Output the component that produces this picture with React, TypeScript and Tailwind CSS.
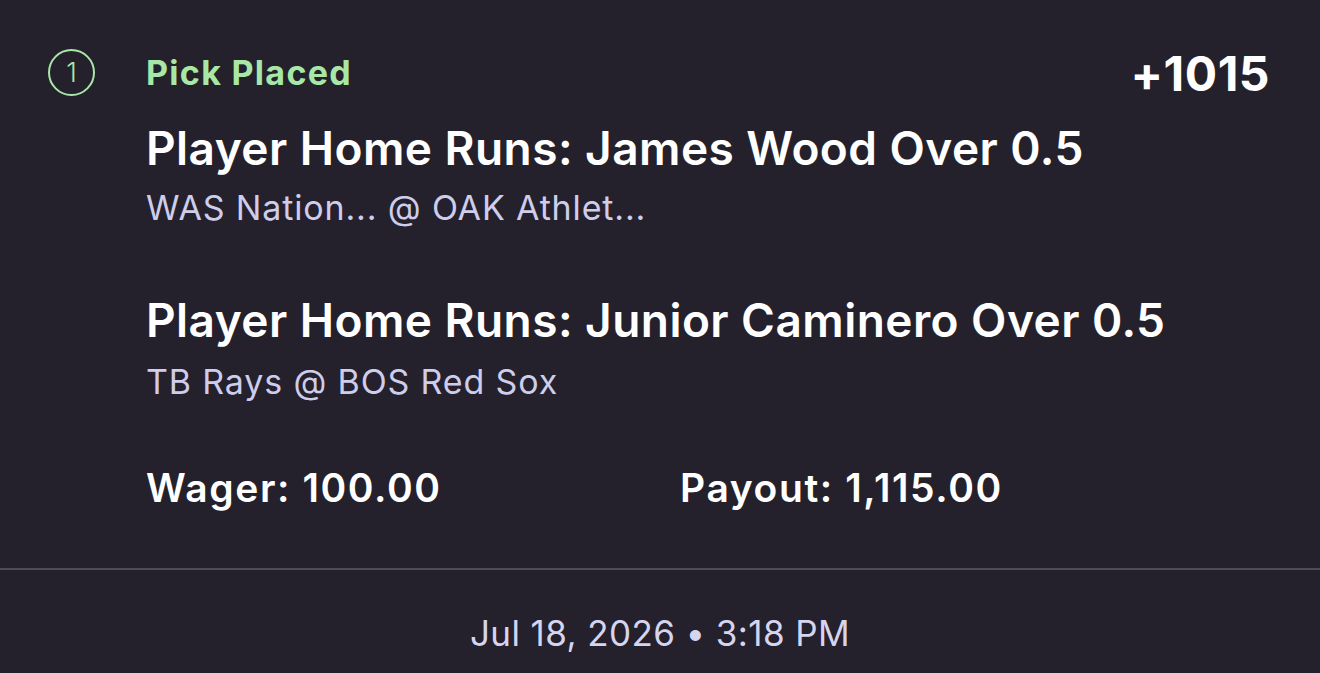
import React from 'react';

const legs = [
  { title: 'Player Home Runs: James Wood Over 0.5', matchup: 'WAS Nation... @ OAK Athlet...' },
  { title: 'Player Home Runs: Junior Caminero Over 0.5', matchup: 'TB Rays @ BOS Red Sox' },
];

const StepBadge = ({ n }: { n: number }) => (
  <div className="flex h-[47px] w-[47px] items-center justify-center rounded-full border-2 border-[#a8e8a6] text-[27px] font-light leading-none text-[#a8e8a6]">
    {n}
  </div>
);

export default function App() {
  return (
    <div className="min-h-[673px] w-full bg-[#24212c] font-['Inter','Noto_Sans',sans-serif] text-white">
      <div className="flex pt-[47px] pl-[48px] pr-[50px]">
        <div className="w-[98px] shrink-0">
          <div className="flex h-[50px] items-center">
            <StepBadge n={1} />
          </div>
        </div>
        <div className="flex-1">
          <div className="flex h-[50px] items-center justify-between">
            <span className="text-[34px] font-bold tracking-[1.3px] text-[#a8e8a6]">Pick Placed</span>
            <span className="mt-[4px] text-[48px] font-bold tracking-[0.5px]">+1015</span>
          </div>

          {legs.map((leg, i) => (
            <div key={leg.title} className={i === 0 ? 'mt-[25px]' : 'mt-[66px]'}>
              <div className="text-[46px] font-semibold leading-[52px] tracking-[0.45px]">{leg.title}</div>
              <div className={`${i === 0 ? 'mt-[14px]' : 'mt-[16px]'} text-[34px] leading-[40px] tracking-[0.85px] text-[#cfcdec]`}>{leg.matchup}</div>
            </div>
          ))}

          <div className="mt-[63px] flex h-[46px] items-center text-[39px] font-semibold tracking-[1.6px]">
            <span className="w-[534px]">Wager: 100.00</span>
            <span>Payout: 1,115.00</span>
          </div>
        </div>
      </div>

      <div className="mt-[57px] h-[2px] w-full bg-[#4f4c59]" />

      <div className="mt-[43px] text-center text-[35px] leading-[40px] tracking-[0.4px] text-[#d6d5f0]">
        Jul 18, 2026 • 3:18 PM
      </div>
    </div>
  );
}
